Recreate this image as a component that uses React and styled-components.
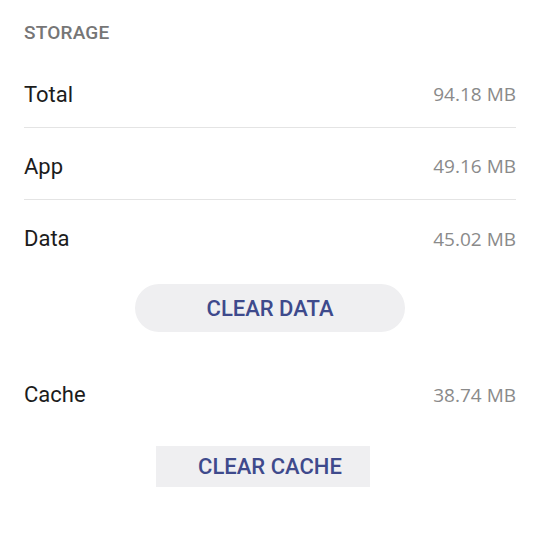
import React from 'react';
import styled, { createGlobalStyle } from 'styled-components';

const GlobalStyle = createGlobalStyle`
	body {
		margin: 0;
		background: #ffffff;
		font-family: Roboto, "Liberation Sans", sans-serif;
	}
`;

const Page = styled.div`
	display: flex;
	flex-direction: column;
	padding: 0 24px;
	width: 540px;
	box-sizing: border-box;
`;

const SectionTitle = styled.div`
	height: 56px;
	padding-top: 21px;
	box-sizing: border-box;
	font-size: 19px;
	font-weight: 500;
	color: #767676;
	letter-spacing: 0.2px;
`;

const Row = styled.div`
	display: flex;
	align-items: center;
	justify-content: space-between;
	height: 72px;
	padding-top: 5px;
	box-sizing: border-box;
	border-bottom: ${props => (props.divider ? '1px solid #e4e4e4' : 'none')};
`;

const Label = styled.span`
	font-size: 22px;
	color: #1c1c1c;
`;

const Value = styled.span`
	font-family: "Open Sans", "Noto Sans", sans-serif;
	font-size: 19px;
	color: #8a8a8a;
`;

const ButtonWrap = styled.div`
	display: flex;
	justify-content: center;
	margin-top: ${props => props.top}px;
	margin-bottom: ${props => props.bottom || 0}px;
`;

const ActionButton = styled.button`
	display: flex;
	align-items: center;
	justify-content: center;
	width: ${props => props.w}px;
	height: ${props => props.h}px;
	border: none;
	border-radius: ${props => (props.pill ? '24px' : '0')};
	background: #efeff1;
	color: #3e4a8c;
	font-family: Roboto, "Liberation Sans", sans-serif;
	font-size: 22px;
	font-weight: 500;
	padding: 0 0 0 ${props => props.shift || 0}px;
	margin-right: ${props => props.shift || 0}px;
	cursor: pointer;
`;

const storage = [
	{ label: 'Total', value: '94.18 MB' },
	{ label: 'App', value: '49.16 MB' },
	{ label: 'Data', value: '45.02 MB' }
];

export default function App() {
	return (
		<Page>
			<GlobalStyle />
			<SectionTitle>STORAGE</SectionTitle>
			{storage.map((item, i) => (
				<Row key={item.label} divider={i < storage.length - 1}>
					<Label>{item.label}</Label>
					<Value>{item.value}</Value>
				</Row>
			))}
			<ButtonWrap top={12} bottom={24}>
				<ActionButton pill w={270} h={48}>CLEAR DATA</ActionButton>
			</ButtonWrap>
			<Row>
				<Label>Cache</Label>
				<Value>38.74 MB</Value>
			</Row>
			<ButtonWrap top={18}>
				<ActionButton w={214} h={41} shift={14}>CLEAR CACHE</ActionButton>
			</ButtonWrap>
		</Page>
	);
}
